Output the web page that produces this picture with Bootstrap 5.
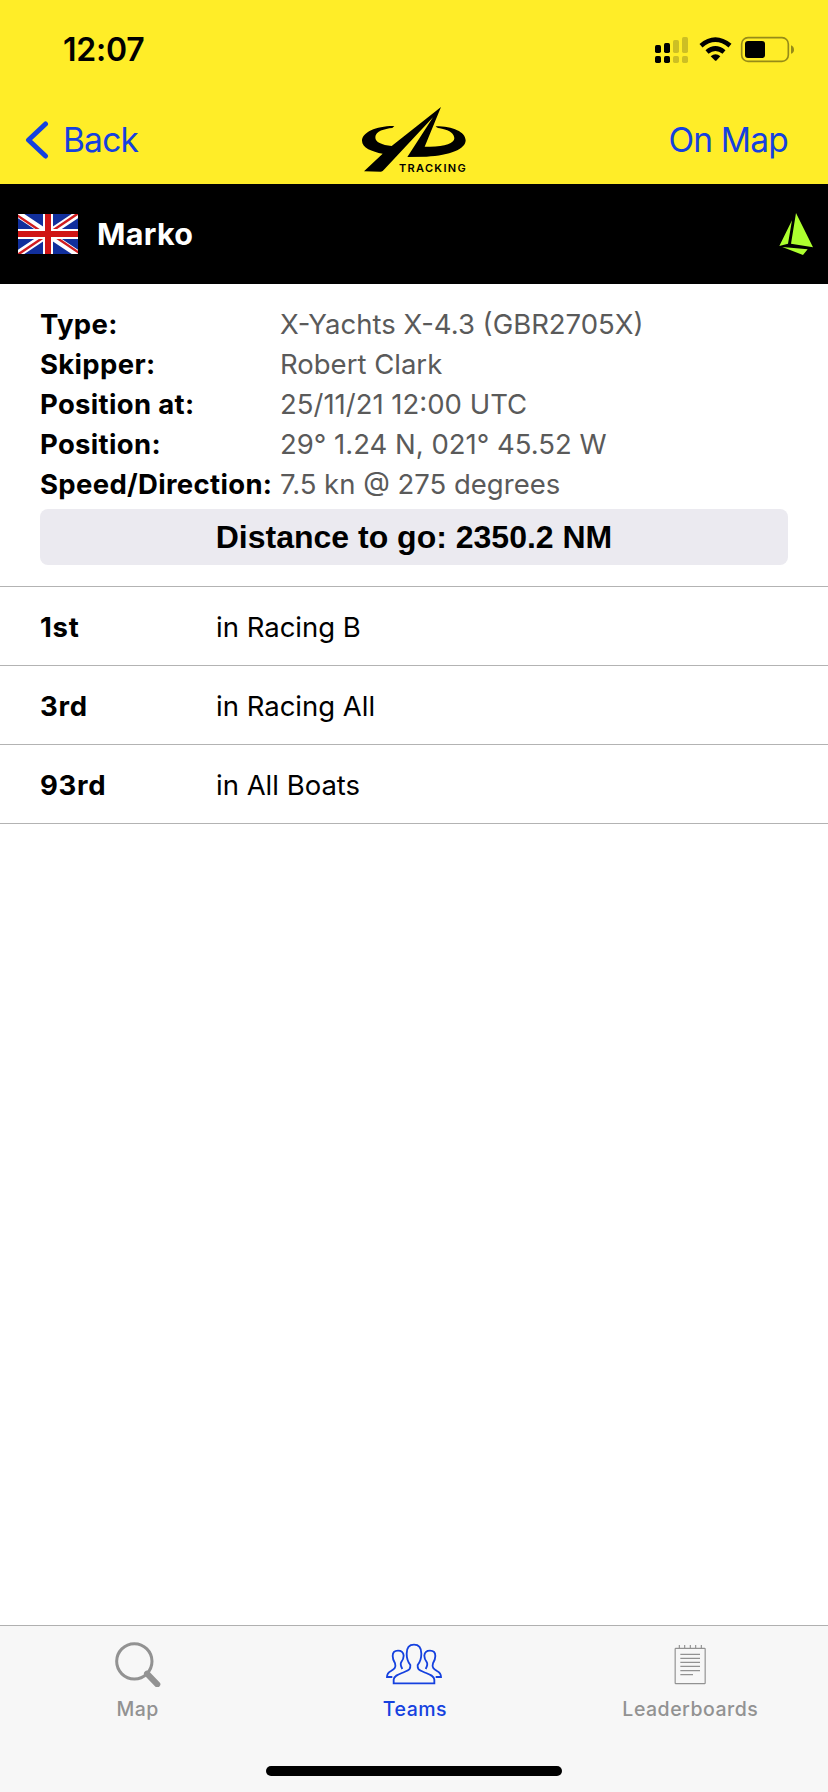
<!DOCTYPE html>
<html lang="en">
<head>
<meta charset="utf-8">
<meta name="viewport" content="width=device-width, initial-scale=1">
<title>Marko - YB Tracking</title>
<link rel="stylesheet" href="https://cdn.jsdelivr.net/npm/bootstrap@5.3.0/dist/css/bootstrap.min.css">
<style>
  body { font-family: Inter, "Liberation Sans", sans-serif; color: #000; background: #fff; height: 1792px; }
  svg { display: block; flex: none; }
  .brand-bg { background: #ffed28; }
  .status-strip { height: 95px; padding: 20px 8px 0 63px; }
  .clock { font-size: 32px; font-weight: 600; line-height: 40px; margin-top: 10px; letter-spacing: -.2px; }
  .top-nav { height: 89px; padding: 0 25px 0 27px; }
  .top-nav a { color: #1541df; font-size: 33.5px; line-height: 40px; padding-top: 25px; }
  .back-label { letter-spacing: -.8px; margin-left: 14px; }
  .back-arrow { margin-left: -2px; }
  .map-label { letter-spacing: -.8px; margin-right: 15px; }
  .team-bar { height: 100px; padding: 0 15px 0 18px; background: #000; }
  .team-name { font-size: 30.5px; font-weight: 700; line-height: 40px; margin-left: 19px; letter-spacing: .3px; }
  .facts { padding: 20px 40px 21px; }
  .fact { font-size: 27.5px; line-height: 40px; white-space: nowrap; }
  .fact dt { width: 240px; font-weight: 700; letter-spacing: .32px; }
  .fact dd { color: #5a5a5a; }
  .distance { height: 56px; margin-top: 5px; border-radius: 8px; background: #ebeaf0; font: 700 32px/56px "Liberation Sans", sans-serif; }
  .rank { height: 79px; border-bottom: 1px solid #b3b3b3; padding: 4px 40px 0; font-size: 27.5px; }
  .ranks { border-top: 1px solid #b3b3b3; }
  .rank strong { width: 176px; letter-spacing: .7px; }
  .tab-strip { height: 167px; background: #f7f7f7; border-top: 1px solid #b0b0b0; }
  .tab-link { color: #929292; font-size: 19.5px; font-weight: 500; line-height: 24px; text-decoration: none; letter-spacing: .5px; padding-top: 11px; }
  .tab-link:first-child { padding-right: 2px; }
  .tab-link.current { color: #1541df; }
  .tab-link span { margin-top: 10px; }
  .home-bar { width: 296px; height: 10px; margin: 0 auto 16px; border-radius: 5px; background: #000; }
</style>
</head>
<body class="d-flex flex-column overflow-hidden">
<header class="brand-bg">
  <div class="status-strip d-flex justify-content-between">
    <div class="clock">12:07</div>
    <svg width="180" height="60" viewBox="0 0 540 180">
      <g>
        <rect x="45" y="75" width="18" height="24" rx="5"/><rect x="72" y="69" width="18" height="30" rx="5"/>
        <rect x="45" y="108" width="18" height="21" rx="5"/><rect x="72" y="108" width="18" height="21" rx="5"/>
      </g>
      <g fill="#cdbf24">
        <rect x="99" y="60" width="18" height="39" rx="5"/><rect x="126" y="51" width="18" height="48" rx="5"/>
        <rect x="99" y="108" width="18" height="21" rx="5"/><rect x="126" y="108" width="18" height="21" rx="5"/>
      </g>
      <path d="M183 77Q226 41 270 77M201 96Q226 75 252 96" fill="none" stroke="#000" stroke-width="14"/>
      <path d="M212 109Q227 97 241 109L230 121Q227 124 224 121Z"/>
      <rect x="305" y="53" width="140" height="71" rx="19" fill="none" stroke="#968b18" stroke-width="5"/>
      <rect x="315" y="63" width="60" height="51" rx="9"/>
      <path d="M453 76Q462 80 462 89Q462 98 453 101Z" fill="#968b18"/>
    </svg>
  </div>
  <nav class="top-nav row g-0 align-items-start">
    <a href="#" class="col d-flex text-decoration-none">
      <svg class="back-arrow" width="24" height="40" viewBox="0 0 24 40"><path d="M20.500 4L3.500 20L20.500 36" fill="none" stroke="#1541df" stroke-width="5" stroke-linecap="round" stroke-linejoin="round"/></svg>
      <span class="back-label">Back</span>
    </a>
    <svg class="col-auto" width="130" height="89" viewBox="0 0 390 267">
      <path d="M133 93C80 92 36 112 36 137C36 158 66 170 98 176L42 229L93 230Q99 229 106 220L249 67L172 186L230 185C300 182 347 162 347 136C346 111 310 94 257 94C260 100 267 99 276 101C300 106 313 116 313 130C313 145 280 158 224 155L273 36L125 153C96 150 75 142 76 126C77 109 103 101 127 99Z"/>
      <text x="147" y="231" font-family="Inter, sans-serif" font-size="33" font-weight="600" textLength="200" lengthAdjust="spacing">TRACKING</text>
    </svg>
    <a href="#" class="col text-end text-decoration-none"><span class="map-label">On Map</span></a>
  </nav>
</header>
<section class="team-bar d-flex align-items-center text-white">
  <svg width="60" height="40" viewBox="0 0 60 40">
    <path fill="#112f9c" d="M0 0H60V40H0Z"/>
    <path d="M0 0L60 40M60 0L0 40" stroke="#fff" stroke-width="7"/>
    <path d="M-1 1.2L24 18M36 22L61 38.8M61 -1.2L34 17M-1 41.2L26 23" stroke="#d01c1f" stroke-width="2.4"/>
    <path d="M30 0V40M0 20H60" stroke="#fff" stroke-width="10"/>
    <path d="M30 0V40M0 20H60" stroke="#d01414" stroke-width="6"/>
  </svg>
  <span class="team-name flex-grow-1">Marko</span>
  <svg width="34" height="44" viewBox="414 306 102 132" fill="#adff2f"><path d="M465 309L516 412L450 401ZM453 331L441 401L415 408ZM424 411L500 418L486 435Z"/></svg>
</section>
<main class="flex-grow-1">
  <dl class="facts mb-0">
    <div class="fact d-flex"><dt>Type:</dt><dd class="mb-0">X-Yachts X-4.3 (GBR2705X)</dd></div>
    <div class="fact d-flex"><dt>Skipper:</dt><dd class="mb-0">Robert Clark</dd></div>
    <div class="fact d-flex"><dt>Position at:</dt><dd class="mb-0">25/11/21 12:00 UTC</dd></div>
    <div class="fact d-flex"><dt>Position:</dt><dd class="mb-0">29° 1.24 N, 021° 45.52 W</dd></div>
    <div class="fact d-flex"><dt>Speed/Direction:</dt><dd class="mb-0">7.5 kn @ 275 degrees</dd></div>
    <div class="distance text-center">Distance to go: 2350.2 NM</div>
  </dl>
  <div class="ranks">
    <div class="rank d-flex align-items-center"><strong>1st</strong><span>in Racing B</span></div>
    <div class="rank d-flex align-items-center"><strong>3rd</strong><span>in Racing All</span></div>
    <div class="rank d-flex align-items-center"><strong>93rd</strong><span>in All Boats</span></div>
  </div>
</main>
<footer class="tab-strip d-flex flex-column justify-content-between">
  <nav class="row g-0 text-center">
    <a href="#" class="col tab-link d-flex flex-column align-items-center">
      <svg width="50" height="50" viewBox="69 66 150 150"><circle cx="133" cy="139" r="53" fill="none" stroke="#929292" stroke-width="9"/><path d="M171 176L202 208" stroke="#929292" stroke-width="18" stroke-linecap="round"/></svg>
      <span>Map</span>
    </a>
    <a href="#" class="col tab-link current d-flex flex-column align-items-center">
      <svg width="60" height="50" viewBox="72 66 180 150" fill="none" stroke="#1541df" stroke-width="5.500">
        <path d="M98 205V194C99 181 116 177 130 171C145 165 149 163 148 150C141 141 137 130 137 116C137 99 145 89 159 89C173 89 181 99 181 116C181 130 177 141 170 150C169 163 173 165 188 171C202 177 219 181 220 194V205Z"/>
        <path d="M124 162C119 153 117 147 121 141C126 134 128 129 128 122C127 112 121 107 111 107C101 107 95 113 95 123C95 133 99 140 102 145C106 157 100 162 90 168C80 173 78 177 78 186H94M194 162C199 153 201 147 197 141C192 134 190 129 190 122C191 112 197 107 207 107C217 107 223 113 223 123C223 133 219 140 216 145C212 157 218 162 228 168C238 173 240 177 240 186H224"/>
      </svg>
      <span>Teams</span>
    </a>
    <a href="#" class="col tab-link d-flex flex-column align-items-center">
      <svg width="50" height="50" viewBox="163 66 150 150" fill="none" stroke="#929292" stroke-width="3.500"><rect x="193.500" y="100" width="90" height="106" rx="2"/><path d="M206 90V101M222 90V101M239 90V101M255 90V101M272 90V101M209 118H268M209 130H268M209 142H268M209 154H268M209 167H268M209 179H247"/></svg>
      <span>Leaderboards</span>
    </a>
  </nav>
  <div class="home-bar"></div>
</footer>
<script src="https://cdn.jsdelivr.net/npm/bootstrap@5.3.0/dist/js/bootstrap.bundle.min.js"></script>
</body>
</html>
